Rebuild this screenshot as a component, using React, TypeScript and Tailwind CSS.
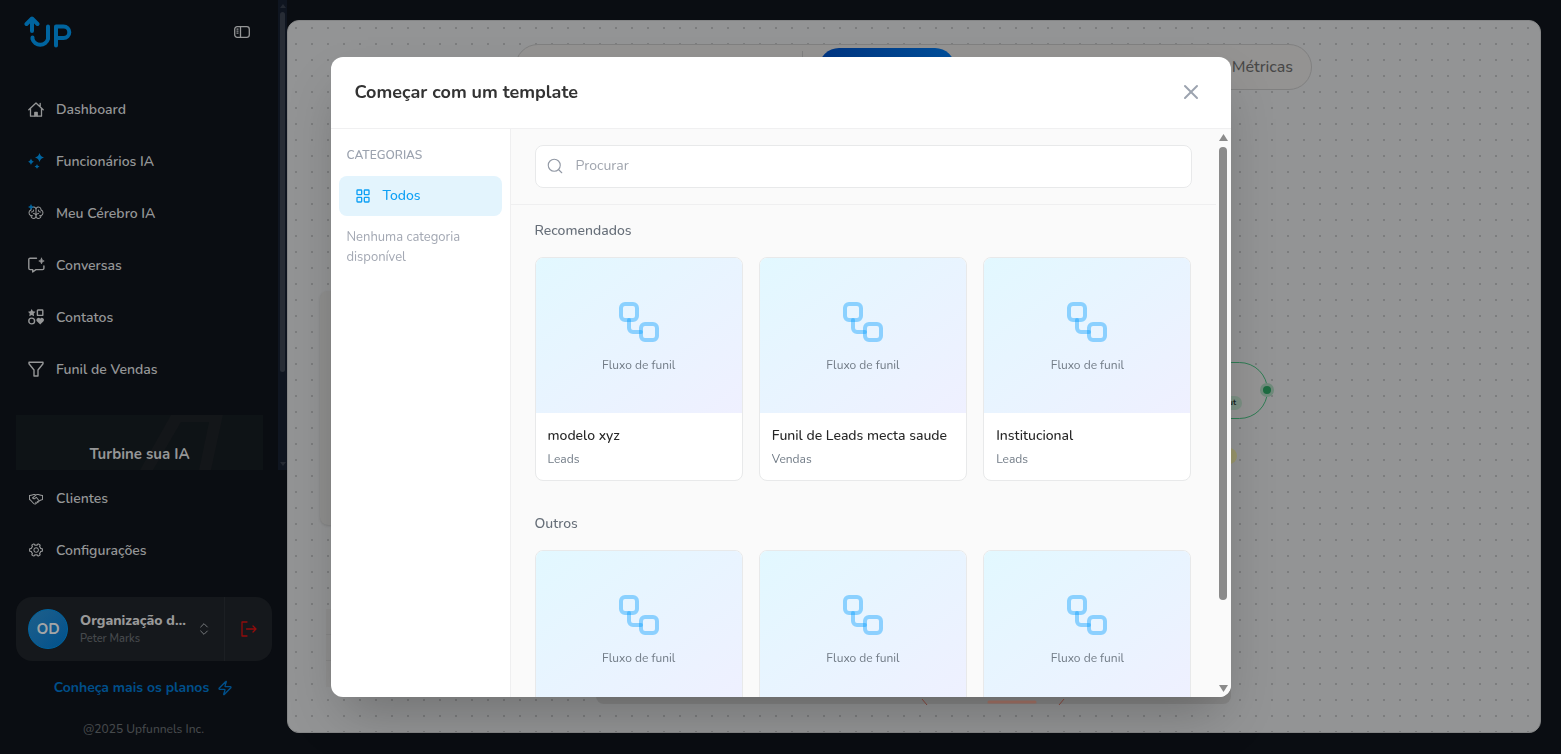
import { LayoutGrid, Search, Workflow, X, Zap, ChevronsUpDown } from "lucide-react";
import { AiOutlineSetting } from "react-icons/ai";
import { LiaHandshakeSolid } from "react-icons/lia";
import { PiBrain } from "react-icons/pi";
import { ReactNode, useState } from "react";

type Template = { id: number; name: string; category: string };

const recommended: Template[] = [
  { id: 1, name: "modelo xyz", category: "Leads" },
  { id: 2, name: "Funil de Leads mecta saude", category: "Vendas" },
  { id: 3, name: "Institucional", category: "Leads" },
];

const others: Template[] = [
  { id: 4, name: "Lançamento", category: "Vendas" },
  { id: 5, name: "Captação", category: "Leads" },
  { id: 6, name: "Webinar", category: "Leads" },
];

function Logo() {
  return (
    <svg width="48" height="34" viewBox="0 0 48 34" fill="none" stroke="#00649f" strokeWidth="4" strokeLinecap="round" strokeLinejoin="round">
      <path d="M2.500 9 8 3.500l5.500 5.500M8 4.500v11.500" />
      <path d="M8.500 22.500v1.500a8 7.500 0 0 0 15.500 0V11.500" />
      <path d="M32 30.500V11.500h7.500a5.800 5.800 0 0 1 0 11.600H33" />
    </svg>
  );
}

function SidebarIcon() {
  return (
    <svg width="16" height="12" viewBox="0 0 16 12" fill="none" stroke="currentColor" strokeWidth="1.3">
      <rect x="0.700" y="0.700" width="14.600" height="10.600" rx="2.500" />
      <path d="M6.500 .7v10.600M2.500 3.200h2M2.500 5.200h2M2.500 7.200h2" />
    </svg>
  );
}

function HomeIcon() {
  return (
    <svg width="16" height="16" viewBox="0 0 16 16" fill="none" stroke="currentColor" strokeWidth="1.3" strokeLinecap="round" strokeLinejoin="round">
      <path d="M.8 8.800 8 2l7.200 6.800M2.500 7.500v7.700h11V7.500M12.200 5V2.300" />
      <path d="M6.800 15v-3.500h2.400V15" fill="currentColor" />
    </svg>
  );
}

function SparklesIcon() {
  return (
    <svg width="16" height="16" viewBox="0 0 16 16" fill="#00649f">
      <path d="M11.500 0c1 2.800 1.700 3.500 4.500 4.500-2.800 1-3.500 1.700-4.500 4.500-1-2.800-1.700-3.500-4.500-4.500 2.800-1 3.500-1.700 4.500-4.500Z" />
      <path d="M3 5.500c.7 1.900 1.200 2.500 3 3.200-1.800.7-2.300 1.300-3 3.200-.7-1.900-1.200-2.500-3-3.200 1.800-.7 2.300-1.300 3-3.200Z" />
      <path d="M9 11c.5 1.500 1 2 2.500 2.500-1.500.5-2 1-2.500 2.500-.5-1.500-1-2-2.500-2.500C8 13 8.500 12.500 9 11Z" />
    </svg>
  );
}

function BrainIcon() {
  return (
    <span className="relative block">
      <PiBrain size={16} />
      <svg className="absolute -top-px left-0" width="6" height="6" viewBox="0 0 6 6" fill="#00649f">
        <path d="M3 0 4 2l2 1-2 1-1 2-1-2-2-1 2-1Z" />
      </svg>
    </span>
  );
}

function ChatIcon() {
  return (
    <svg className="shrink-0" width="17" height="16" viewBox="0 0 17 16" fill="none" stroke="currentColor" strokeWidth="1.400" strokeLinejoin="round" strokeLinecap="round">
      <path d="M8.500 1.200H2.200A1.300 1.300 0 0 0 .8 2.500v8.800c0 .7.600 1.300 1.400 1.300h2.500v2.400l3.200-2.400h6.600c.8 0 1.400-.6 1.400-1.300V9" />
      <path d="M13.500 1.200c.4 1.700 1 2.400 2.700 2.800-1.700.4-2.300 1.100-2.700 2.800-.4-1.700-1-2.400-2.700-2.800 1.700-.4 2.300-1.100 2.700-2.800Z" fill="currentColor" strokeWidth="0.800" />
    </svg>
  );
}

function ShapesIcon() {
  return (
    <svg width="16" height="16" viewBox="0 0 16 16" fill="none" stroke="currentColor" strokeWidth="1.400">
      <path d="m3.700 0 1.200 2.300 2.600.4-1.800 1.900.4 2.600-2.400-1.200-2.400 1.200.4-2.600L0 2.700l2.500-.4Z" fill="currentColor" stroke="none" />
      <rect x="9.400" y="1" width="5.400" height="5.400" rx="0.500" />
      <circle cx="3.700" cy="12" r="2.900" />
      <path d="M12.200 15.600 8.900 12.200a2 2 0 0 1 3.300-2.400 2 2 0 0 1 3.300 2.400Z" fill="currentColor" stroke="none" />
    </svg>
  );
}

function FunnelIcon() {
  return (
    <svg width="16" height="16" viewBox="0 0 16 16" fill="none" stroke="currentColor" strokeWidth="1.400" strokeLinejoin="round">
      <path d="M1 1.200h14v1.600L10 9v6H6V9L1 2.800Z" />
    </svg>
  );
}

function LogoutIcon() {
  return (
    <svg width="16" height="16" viewBox="0 0 16 16" fill="none" stroke="#930c0c" strokeWidth="1.300" strokeLinecap="round" strokeLinejoin="round">
      <path d="M6 1H1v14h5M5.500 8H15M12 5l3 3-3 3" />
    </svg>
  );
}

function NavItem({ icon, label }: { icon: ReactNode; label: string }) {
  return (
    <li>
      <a href="#" className="flex h-[52px] items-center gap-3 pl-7 text-[14px] font-semibold text-[#959697]">
        <span className="flex w-4 justify-center">{icon}</span>
        {label}
      </a>
    </li>
  );
}

function Sidebar() {
  return (
    <aside className="flex w-[287px] shrink-0 flex-col">
      <div className="flex min-h-0 flex-1">
        <div className="flex min-w-0 flex-1 flex-col overflow-hidden">
          <div className="flex shrink-0 items-start justify-between pt-[15px] pr-7 pb-[34px] pl-6">
            <Logo />
            <button type="button" aria-label="Recolher menu" className="mt-[11px] text-[#959697]">
              <SidebarIcon />
            </button>
          </div>
          <ul className="shrink-0">
            <NavItem icon={<HomeIcon />} label="Dashboard" />
            <NavItem icon={<SparklesIcon />} label="Funcionários IA" />
            <NavItem icon={<BrainIcon />} label="Meu Cérebro IA" />
            <NavItem icon={<ChatIcon />} label="Conversas" />
            <NavItem icon={<ShapesIcon />} label="Contatos" />
            <NavItem icon={<FunnelIcon />} label="Funil de Vendas" />
          </ul>
          {/* banner de upgrade */}
          <div className="relative mt-5 mr-[15px] ml-4 h-40 shrink-0 bg-[#0e1316] pt-7 text-center">
            <svg className="absolute top-0 right-0" width="124" height="55" viewBox="0 0 124 55" fill="#131619">
              <path d="M32 0h52L72 55H60L70 7H42L14 55H1Z" />
            </svg>
            <p className="relative text-[15px] font-bold text-[#959697]">Turbine sua IA</p>
          </div>
        </div>
        <div className="flex w-[9px] flex-col items-center bg-[#0f1520] py-1">
          <svg width="6" height="4" viewBox="0 0 6 4" fill="#242932"><path d="M3 0 6 4H0Z" /></svg>
          <div className="mt-1 w-[5px] flex-1">
            <div className="h-4/5 rounded-full bg-[#272c35]" />
          </div>
          <svg width="6" height="4" viewBox="0 0 6 4" fill="#242932"><path d="M3 4 0 0h6Z" /></svg>
        </div>
      </div>

      <div className="pt-0.5">
        <ul>
          <NavItem icon={<LiaHandshakeSolid size={17} />} label="Clientes" />
          <NavItem icon={<AiOutlineSetting size={16} className="rotate-90" />} label="Configurações" />
        </ul>
        <div className="mt-[21px] mr-[15px] ml-4 flex h-16 items-stretch overflow-hidden rounded-2xl bg-[#15181c]">
          <button type="button" className="flex min-w-0 flex-1 items-center gap-2 border-r border-[#1c1f23] px-3 text-left">
            <span className="mr-1 flex size-10 shrink-0 items-center justify-center rounded-full border border-[#00649f] bg-linear-to-br from-[#1d5f8a] to-[#00518c] text-[15px] font-bold text-[#a3a5a6]">
              OD
            </span>
            <span className="min-w-0 flex-1">
              <span className="block truncate text-[14px] leading-5 font-extrabold text-[#999]">Organização de Peter Marks</span>
              <span className="block text-[11px] leading-4 font-semibold text-[#46494c]">Peter Marks</span>
            </span>
            <ChevronsUpDown size={16} strokeWidth={1.5} className="shrink-0 text-[#777a7d]" />
          </button>
          <button type="button" aria-label="Sair" className="flex w-[47px] items-center justify-center">
            <LogoutIcon />
          </button>
        </div>
        <a href="#" className="mt-[17px] flex items-center justify-center gap-2 text-[14px] leading-5 font-bold text-[#004f8a]">
          Conheça mais os planos
          <Zap size={16} strokeWidth={2} />
        </a>
        <p className="mt-[23px] mb-[17px] text-center text-[12px] leading-4 font-medium text-[#46494c]">@2025 Upfunnels Inc.</p>
      </div>
    </aside>
  );
}

function FlowCanvas() {
  return (
    <main className="relative mt-5 mr-5 mb-[21px] min-w-0 flex-1 overflow-hidden rounded-xl border border-[#858687] bg-[#939495] bg-[radial-gradient(circle_at_center,#7c7d7e_1px,transparent_1.500px)] bg-[size:16px_16px] bg-[position:0_-1px]">
      {/* abas do editor */}
      <nav className="absolute top-[23px] left-[227px] flex h-[46px] w-[797px] items-start rounded-full border border-[#808080] bg-[#949392]">
        <span className="mt-1.5 ml-[286px] h-8 w-px bg-[#808080]" />
        <span className="mt-[3px] ml-4 h-10 w-[136px] rounded-full bg-linear-to-r from-[#003582] to-[#004f9b]" />
        <span className="mt-2.5 ml-auto pr-[18px] text-[16px] leading-6 font-medium text-[#484848]">Métricas</span>
      </nav>
      {/* nós do fluxo */}
      <div className="absolute top-[270px] left-8 h-[234px] w-64 rounded-lg bg-[#8f8f8e] shadow-sm" />
      <div className="absolute top-[588px] left-[38px] flex w-7 flex-col bg-[#8f8f8f]">
        <span className="h-[26px] border-b border-[#868686]" />
        <span className="h-[26px] border-b border-[#868686]" />
        <span className="h-[26px]" />
      </div>
      <div className="absolute top-[341px] left-[780px] flex h-[57px] w-[200px] items-end justify-end rounded-full border border-[#2f7d54] bg-[#949494] pr-[25px] pb-2">
        <span className="rounded-full bg-[#7b9083] px-1.5 text-[8px] leading-[14px] font-bold text-[#17241c]">Output</span>
      </div>
      <div className="absolute top-[362px] left-[972px] size-[14px] rounded-full border-3 border-[#6f8a7b] bg-[#1d6b41]" />
      <div className="absolute top-[427px] left-[933px] size-4 rounded-full bg-[#99966c]" />
      <div className="absolute top-[660px] left-[308px] h-[23px] w-[635px] rounded-lg bg-[#868686]" />
      <svg className="absolute top-[676px] left-[630px]" width="150" height="8" viewBox="0 0 150 8" fill="none" stroke="#8c4a40">
        <path d="M4 2l5 6M141 8l5-6" />
        <path d="M71 5h46" stroke="#a57367" strokeWidth="3" strokeLinecap="round" />
      </svg>
    </main>
  );
}

function TemplateCard({ template }: { template: Template }) {
  return (
    <button type="button" className="block overflow-hidden rounded-lg border border-[#e8e9ea] bg-white text-left">
      <span className="flex h-[155px] flex-col items-center justify-center gap-[11px] bg-linear-to-br from-[#e2f8ff] to-[#eff0ff]">
        <Workflow size={48} className="text-[#009cff]/40" />
        <span className="text-[12px] leading-4 text-[#717b86]">Fluxo de funil</span>
      </span>
      <span className="block p-3">
        <span className="block truncate text-[14px] leading-[21px] font-medium text-[#262626]">{template.name}</span>
        <span className="mt-1 block text-[12px] leading-[18px] text-[#717b86]">{template.category}</span>
      </span>
    </button>
  );
}

function TemplateSection({ title, templates }: { title: string; templates: Template[] }) {
  return (
    <section>
      <h3 className="text-[14px] leading-5 font-medium text-[#666e78]">{title}</h3>
      <div className="mt-4 grid grid-cols-3 gap-4">
        {templates.map((template) => (
          <TemplateCard key={template.id} template={template} />
        ))}
      </div>
    </section>
  );
}

function TemplateModal() {
  const [search, setSearch] = useState("");

  return (
    <div role="dialog" aria-labelledby="modal-title" className="flex h-[85vh] w-[900px] max-w-full flex-col overflow-hidden rounded-xl bg-white shadow-2xl">
      <header className="flex h-[72px] shrink-0 items-center justify-between border-b border-[#f0f0f1] px-6">
        <h2 id="modal-title" className="text-[18px] font-bold text-[#333]">
          Começar com um template
        </h2>
        <button type="button" aria-label="Fechar" className="mr-1 text-[#9ca3af]">
          <X size={24} />
        </button>
      </header>
      <div className="flex min-h-0 flex-1">
        {/* categorias */}
        <div className="w-[180px] shrink-0 border-r border-[#efeff0] px-2 pt-4">
          <h3 className="px-2 text-[12px] leading-5 font-semibold text-[#9ca3af] uppercase">Categorias</h3>
          <button type="button" className="mt-[11px] flex h-10 w-full items-center gap-3 rounded-lg bg-[#e3f4fd] px-4 text-[14px] font-medium text-[#0ea0f5]">
            <LayoutGrid size={16} strokeWidth={2} />
            Todos
          </button>
          <p className="mt-[11px] px-2 text-[13px] leading-5 text-[#a3a8b3]">Nenhuma categoria disponível</p>
        </div>
        {/* lista de templates */}
        <div className="flex min-w-0 flex-1 bg-[#fafafa]">
          <div className="min-w-0 flex-1 overflow-hidden">
            <div className="border-b border-[#efeff0] px-6 py-4">
              <label className="flex h-[43px] items-center gap-3 rounded-lg border border-[#e8e9ea] bg-white px-2.5">
                <Search size={18} strokeWidth={1.5} className="text-[#9299a5]" />
                <input
                  type="search"
                  aria-label="Procurar"
                  placeholder="Procurar"
                  value={search}
                  onChange={(e) => setSearch(e.target.value)}
                  className="min-w-0 flex-1 text-[14px] leading-5 outline-none placeholder:text-[#a0a5ae]"
                />
              </label>
            </div>
            <div className="flex flex-col gap-[33px] px-6 pt-4">
              <TemplateSection title="Recomendados" templates={recommended} />
              <TemplateSection title="Outros" templates={others} />
            </div>
          </div>
          {/* barra de rolagem */}
          <div className="flex w-[15px] flex-col items-center py-[5px]">
            <svg width="9" height="7" viewBox="0 0 9 7" fill="#8b8b8b"><path d="M4.500 0 9 7H0Z" /></svg>
            <div className="my-1.5 w-2 flex-1">
              <div className="h-[85%] rounded-full bg-[#8b8b8b]" />
            </div>
            <svg width="9" height="7" viewBox="0 0 9 7" fill="#8b8b8b"><path d="M4.500 7 0 0h9Z" /></svg>
          </div>
        </div>
      </div>
    </div>
  );
}

export default function App() {
  return (
    <div className="flex h-screen overflow-hidden bg-[#0a0d12] font-['Nunito',sans-serif]">
      <Sidebar />
      <FlowCanvas />
      <div className="fixed inset-0 flex items-center justify-center">
        <TemplateModal />
      </div>
    </div>
  );
}
